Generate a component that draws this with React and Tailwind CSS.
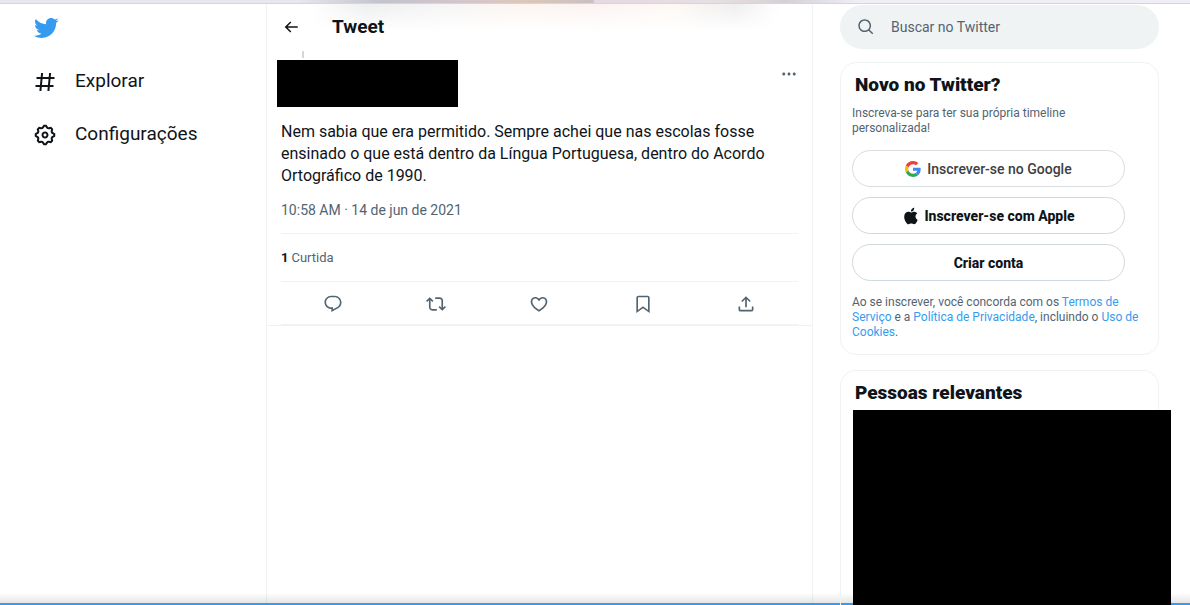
import React from 'react';

const icons = {
  bird: 'M23.643 4.937c-.835.37-1.732.62-2.675.733.962-.576 1.7-1.49 2.048-2.578-.9.534-1.897.922-2.958 1.13-.85-.904-2.06-1.47-3.4-1.47-2.572 0-4.658 2.086-4.658 4.66 0 .364.042.718.12 1.06-3.873-.195-7.304-2.05-9.602-4.868-.4.69-.63 1.49-.63 2.342 0 1.616.823 3.043 2.072 3.878-.764-.025-1.482-.234-2.11-.583v.06c0 2.257 1.605 4.14 3.737 4.568-.392.106-.803.162-1.227.162-.3 0-.593-.028-.877-.082.593 1.85 2.313 3.198 4.352 3.234-1.595 1.25-3.604 1.995-5.786 1.995-.376 0-.747-.022-1.112-.065 2.062 1.323 4.51 2.093 7.14 2.093 8.57 0 13.255-7.098 13.255-13.254 0-.2-.005-.402-.014-.602.91-.658 1.7-1.477 2.323-2.41z',
  hash: 'M10.09 3.098L9.72 7h5.99l.39-4.089 1.99.187L17.72 7h3.78v2h-3.97l-.56 6h3.53v2h-3.72l-.38 4.089-1.99-.187.36-3.902H8.78l-.38 4.089-1.99-.187L6.77 17H2.5v-2h4.46l.56-6H3.5V7h4.21l.39-4.089 1.99.187zM14.96 15l.56-6H9.53l-.56 6h5.99z',
  gear: 'M10.54 1.75h2.92l1.57 2.36c.11.17.32.25.53.21l2.53-.59 2.17 2.17-.58 2.54c-.05.2.04.41.21.53l2.36 1.57v2.92l-2.36 1.57c-.17.12-.26.33-.21.53l.58 2.54-2.17 2.17-2.53-.59c-.21-.04-.42.04-.53.21l-1.57 2.36h-2.92l-1.58-2.36c-.11-.17-.32-.25-.52-.21l-2.54.59-2.17-2.17.58-2.54c.05-.2-.03-.41-.21-.53l-2.35-1.57v-2.92L4.1 8.97c.18-.12.26-.33.21-.53L3.73 5.9 5.9 3.73l2.54.59c.2.04.41-.04.52-.21l1.58-2.36zm1.07 2l-.98 1.47C10.05 6.08 9 6.5 7.99 6.27l-1.46-.34-.6.6.33 1.46c.24 1.01-.18 2.07-1.05 2.64l-1.46.98v.78l1.46.98c.87.57 1.29 1.63 1.05 2.64l-.33 1.46.6.6 1.46-.34c1.01-.23 2.06.19 2.64 1.05l.98 1.47h.78l.97-1.47c.58-.86 1.63-1.28 2.65-1.05l1.45.34.61-.6-.34-1.46c-.23-1.01.18-2.07 1.05-2.64l1.47-.98v-.78l-1.47-.98c-.87-.57-1.28-1.63-1.05-2.64l.34-1.46-.61-.6-1.45.34c-1.02.23-2.07-.19-2.65-1.05l-.97-1.47h-.78zM12 10.5c-.83 0-1.5.67-1.5 1.5s.67 1.5 1.5 1.5c.82 0 1.5-.67 1.5-1.5s-.68-1.5-1.5-1.5zM8.5 12c0-1.93 1.56-3.5 3.5-3.5 1.93 0 3.5 1.57 3.5 3.5s-1.57 3.5-3.5 3.5c-1.94 0-3.5-1.57-3.5-3.5z',
  back: 'M7.414 13l5.043 5.04-1.414 1.42L3.586 12l7.457-7.46 1.414 1.42L7.414 11H21v2H7.414z',
  more: 'M3 12c0-1.1.9-2 2-2s2 .9 2 2-.9 2-2 2-2-.9-2-2zm9 2c1.1 0 2-.9 2-2s-.9-2-2-2-2 .9-2 2 .9 2 2 2zm7 0c1.1 0 2-.9 2-2s-.9-2-2-2-2 .9-2 2 .9 2 2 2z',
  search: 'M10.25 3.75c-3.59 0-6.5 2.91-6.5 6.5s2.91 6.5 6.5 6.5c1.795 0 3.419-.726 4.596-1.904 1.178-1.177 1.904-2.801 1.904-4.596 0-3.59-2.91-6.5-6.5-6.5zm-8.5 6.5c0-4.694 3.806-8.5 8.5-8.5s8.5 3.806 8.5 8.5c0 1.986-.682 3.815-1.824 5.262l4.781 4.781-1.414 1.414-4.781-4.781c-1.447 1.142-3.276 1.824-5.262 1.824-4.694 0-8.5-3.806-8.5-8.5z',
  reply: 'M1.751 10c0-4.42 3.584-8 8.005-8h4.366c4.49 0 8.129 3.64 8.129 8.13 0 2.96-1.607 5.68-4.196 7.11l-8.054 4.46v-3.69h-.067c-4.49.1-8.183-3.51-8.183-8.01zm8.005-6c-3.317 0-6.005 2.69-6.005 6 0 3.37 2.77 6.08 6.138 6.01l.351-.01h1.761v2.3l5.087-2.81c1.951-1.08 3.163-3.13 3.163-5.36 0-3.39-2.744-6.13-6.129-6.13H9.756z',
  retweet: 'M4.5 3.88l4.432 4.14-1.364 1.46L5.5 7.55V16c0 1.1.896 2 2 2H13v2H7.5c-2.209 0-4-1.79-4-4V7.55L1.432 9.48.068 8.02 4.5 3.88zM16.5 6H11V4h5.5c2.209 0 4 1.79 4 4v8.45l2.068-1.93 1.364 1.46-4.432 4.14-4.432-4.14 1.364-1.46 2.068 1.93V8c0-1.1-.896-2-2-2z',
  like: 'M16.697 5.5c-1.222-.06-2.679.51-3.89 2.16l-.805 1.09-.806-1.09C9.984 6.01 8.526 5.44 7.304 5.5c-1.243.07-2.349.78-2.91 1.91-.552 1.12-.633 2.78.479 4.82 1.074 1.97 3.257 4.27 7.129 6.61 3.87-2.34 6.052-4.64 7.126-6.61 1.111-2.04 1.03-3.7.477-4.82-.561-1.13-1.666-1.84-2.908-1.91zm4.187 7.69c-1.351 2.48-4.001 5.12-8.379 7.67l-.503.3-.504-.3c-4.379-2.55-7.029-5.19-8.382-7.67-1.36-2.5-1.41-4.86-.514-6.67.887-1.79 2.647-2.91 4.601-3.01 1.651-.09 3.368.56 4.798 2.01 1.429-1.45 3.146-2.1 4.796-2.01 1.954.1 3.714 1.22 4.601 3.01.896 1.81.846 4.17-.514 6.67z',
  bookmark: 'M4 4.5C4 3.12 5.119 2 6.5 2h11C18.881 2 20 3.12 20 4.5v18.44l-8-5.71-8 5.71V4.5zM6.5 4c-.276 0-.5.22-.5.5v14.56l6-4.29 6 4.29V4.5c0-.28-.224-.5-.5-.5h-11z',
  share: 'M12 2.59l5.7 5.7-1.41 1.42L13 6.41V16h-2V6.41l-3.3 3.3-1.41-1.42L12 2.59zM21 15l-.02 3.51c0 1.38-1.12 2.49-2.5 2.49H5.5C4.11 21 3 19.88 3 18.5V15h2v3.5c0 .28.22.5.5.5h12.98c.28 0 .5-.22.5-.5L19 15h2z',
  apple: 'M16.365 1.43c0 1.14-.493 2.27-1.177 3.08-.744.9-1.99 1.57-2.987 1.57-.12 0-.23-.02-.3-.03-.01-.06-.04-.22-.04-.39 0-1.15.572-2.27 1.206-2.98.804-.94 2.142-1.64 3.248-1.68.03.13.05.28.05.43zm4.565 15.71c-.03.07-.463 1.58-1.518 3.12-.945 1.34-1.94 2.71-3.43 2.71-1.517 0-1.9-.88-3.63-.88-1.698 0-2.302.91-3.67.91-1.377 0-2.332-1.26-3.428-2.8-1.287-1.82-2.323-4.63-2.323-7.28 0-4.28 2.797-6.55 5.552-6.55 1.448 0 2.675.95 3.6.95.865 0 2.222-1.01 3.902-1.01.613 0 2.886.06 4.374 2.19-.13.09-2.383 1.37-2.383 4.19 0 3.26 2.854 4.42 2.955 4.45z',
};

const Icon = ({ name, className }) => (
  <svg viewBox="0 0 24 24" fill="currentColor" aria-hidden="true" className={className}>
    <path d={icons[name]} />
  </svg>
);

const GoogleIcon = () => (
  <svg viewBox="0 0 48 48" aria-hidden="true" className="h-4 w-4">
    <path fill="#EA4335" d="M24 9.5c3.54 0 6.71 1.22 9.21 3.6l6.85-6.85C35.9 2.38 30.47 0 24 0 14.62 0 6.51 5.38 2.56 13.22l7.98 6.19C12.43 13.72 17.74 9.5 24 9.5z" />
    <path fill="#4285F4" d="M46.98 24.55c0-1.57-.15-3.09-.38-4.55H24v9.02h12.94c-.58 2.96-2.26 5.48-4.78 7.18l7.73 6c4.51-4.18 7.09-10.36 7.09-17.65z" />
    <path fill="#FBBC05" d="M10.53 28.59c-.48-1.45-.76-2.99-.76-4.59s.27-3.14.76-4.59l-7.98-6.19C.92 16.46 0 20.12 0 24c0 3.88.92 7.54 2.56 10.78l7.97-6.19z" />
    <path fill="#34A853" d="M24 48c6.48 0 11.93-2.13 15.89-5.81l-7.73-6c-2.15 1.45-4.92 2.3-8.16 2.3-6.26 0-11.57-4.22-13.47-9.91l-7.98 6.19C6.51 42.62 14.62 48 24 48z" />
  </svg>
);

const actions = [
  { icon: 'reply', label: 'Responder' },
  { icon: 'retweet', label: 'Retweetar' },
  { icon: 'like', label: 'Curtir' },
  { icon: 'bookmark', label: 'Salvar' },
  { icon: 'share', label: 'Compartilhar' },
];

const NavItem = ({ icon, children }) => (
  <a href="#" className="flex h-[53px] items-center gap-[18px] text-[19px]">
    <Icon name={icon} className="h-6 w-6" />
    {children}
  </a>
);

const SignupButton = ({ children, className }) => (
  <button type="button" className={`flex h-[37px] w-full items-center justify-center rounded-full border text-sm ${className}`}>
    {children}
  </button>
);

const TermLink = ({ children }) => <a href="#" className="text-[#369bf0]">{children}</a>;

const Tweet = () => (
  <article className="border-b border-[#eff3f4] px-3.5">
    <div className="-mx-1 flex justify-between">
      <div>
        <div className="mb-0.5 ml-[25px] h-[7px] w-0.5 bg-[#cfd9de]"></div>
        <div className="h-[47px] w-[181px] bg-black"></div>
      </div>
      <button type="button" aria-label="Mais" className="mt-3.5 mr-1 h-[18px] w-[18px] text-[#536471]">
        <Icon name="more" className="h-[18px] w-[18px]" />
      </button>
    </div>
    <p className="mt-3.5 text-base leading-[22px]">
      Nem sabia que era permitido. Sempre achei que nas escolas fosse ensinado o que está dentro da Língua Portuguesa, dentro do Acordo Ortográfico de 1990.
    </p>
    <p className="my-[13px] text-sm text-[#536471]">10:58 AM · 14 de jun de 2021</p>
    <div className="flex h-12 items-center gap-[3px] border-t border-[#eff3f4] text-[13px] text-[#536471]">
      <strong className="font-bold text-[#0f1419]">1</strong> Curtida
    </div>
    <div className="flex h-11 items-center justify-around border-y border-[#eff3f4] pt-0.5 text-[#536471]">
      {actions.map(a => (
        <button key={a.icon} type="button" aria-label={a.label}>
          <Icon name={a.icon} className="h-5 w-5" />
        </button>
      ))}
    </div>
  </article>
);

const Sidebar = () => (
  <aside className="relative z-10 mr-[31px] ml-[27px] flex w-[319px] shrink-0 flex-col pt-px">
    <label className="flex h-11 shrink-0 items-center gap-4 rounded-full bg-[#eff3f4] px-[17px] text-[#536471]">
      <Icon name="search" className="h-[18px] w-[18px]" />
      <input type="text" aria-label="Buscar" placeholder="Buscar no Twitter" className="min-w-0 flex-1 bg-transparent text-sm outline-none placeholder:text-[#536471]" />
    </label>

    <section className="mt-[13px] rounded-2xl border border-[#eff3f4] px-[11px] pt-2.5 pb-3.5">
      <h2 className="px-[3px] text-[19px] leading-6 font-black">Novo no Twitter?</h2>
      <div className="mt-[9px] mr-[22px]">
        <p className="text-xs leading-[15px] text-[#536471]">Inscreva-se para ter sua própria timeline personalizada!</p>
        <div className="mt-3.5 flex flex-col gap-2.5">
          <SignupButton className="gap-1.5 border-[#dadce0] font-medium text-[#3c4043]">
            <GoogleIcon />
            Inscrever-se no Google
          </SignupButton>
          <SignupButton className="gap-1 border-[#cfd9de] font-extrabold">
            <Icon name="apple" className="h-[18px] w-[18px]" />
            Inscrever-se com Apple
          </SignupButton>
          <SignupButton className="border-[#cfd9de] font-extrabold">Criar conta</SignupButton>
        </div>
      </div>
      <p className="mt-3.5 text-xs leading-[15px] text-[#536471]">
        Ao se inscrever, você concorda com os <TermLink>Termos de Serviço</TermLink> e a <TermLink>Política de Privacidade</TermLink>, incluindo o <TermLink>Uso de Cookies</TermLink>.
      </p>
    </section>

    <section className="mt-[15px] flex flex-1 flex-col rounded-t-2xl border border-b-0 border-[#eff3f4] pt-2.5">
      <h2 className="px-3.5 text-[19px] leading-6 font-black">Pessoas relevantes</h2>
      <div className="-mr-[13px] mt-[5px] ml-3 flex-1 bg-black"></div>
    </section>
  </aside>
);

export default function App() {
  return (
    <div className="relative flex min-h-screen flex-col bg-white font-['Roboto',sans-serif] text-[#0f1419]">
      <div className="h-1 border-b border-[#d8d4dc] bg-[linear-gradient(to_right,#e8e6ef_25%,#c3c3cb_32%,#d6c6cc_40%,#dcc8b8_44%,#cbbfc4_49.8%,#e6d9e2_50%,#e6dfe2_60%,#d5d0d6_66%,#f0edf5_72%)]"></div>

      <div className="flex flex-1">
        <nav className="w-[266px] shrink-0 pt-[11px] pl-[33px]">
          <a href="#" aria-label="Twitter" className="block w-[26px] text-[#369bf0]">
            <Icon name="bird" className="h-[26px] w-[26px]" />
          </a>
          <div className="mt-3.5">
            <NavItem icon="hash">Explorar</NavItem>
            <NavItem icon="gear">Configurações</NavItem>
          </div>
        </nav>

        <main className="min-w-0 flex-1 border-x border-[#eff3f4]">
          <header className="mb-px flex h-[46px] items-center gap-8 bg-[linear-gradient(to_bottom,rgba(255,255,255,0.7),white_60%),linear-gradient(to_right,white_8%,#c4c8cb_18%,#e0dedd_32%,#f6dfd0_46%,#f3d6d3_60%,#faeadb_74%,#c8c8c8_86%,white_94%)] px-[15px]">
            <button type="button" aria-label="Voltar">
              <Icon name="back" className="h-[18px] w-[18px]" />
            </button>
            <h1 className="text-[19px] font-bold">Tweet</h1>
          </header>
          <Tweet />
        </main>

        <Sidebar />
      </div>

      <div className="absolute inset-x-0 bottom-0 h-3 border-b-2 border-[#369bf0] bg-linear-to-b from-transparent to-black/10"></div>
    </div>
  );
}
